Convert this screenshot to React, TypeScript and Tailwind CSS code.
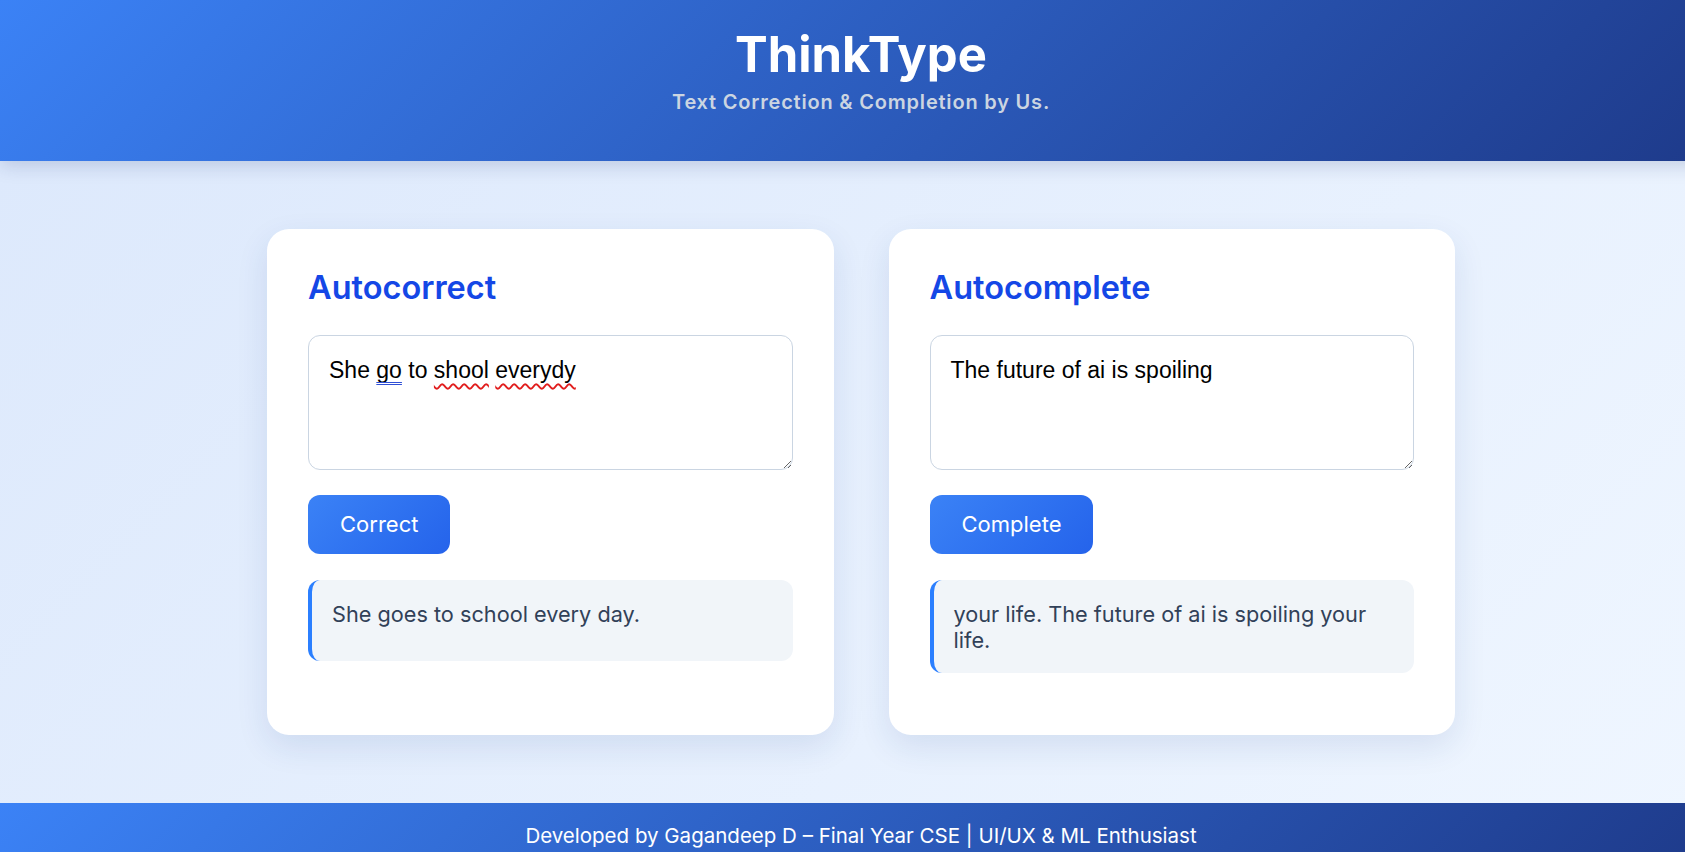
import React, { useState } from "react";

type Mark = { text: string; kind?: "spell" | "grammar" };

const Card = ({
  title,
  value,
  marks,
  action,
  result,
}: {
  title: string;
  value: string;
  marks: Mark[];
  action: string;
  result: string;
}) => {
  const [text, setText] = useState(value);

  return (
    <div className="flex flex-col bg-white rounded-[22px] px-[41px] pt-[38px] pb-[62px] shadow-[0_12px_32px_rgba(30,64,140,0.11)]">
      <h2 className="text-[32.5px] leading-[41px] font-semibold text-blue-700">{title}</h2>
      <div className="relative mt-[27px]">
        <textarea
          value={text}
          onChange={(e) => setText(e.target.value)}
          spellCheck={false}
          className="block h-[135px] w-full rounded-xl border border-slate-300 px-5 pt-[21px] pb-[17px] text-[23px] leading-[26px] text-black font-['Liberation_Sans',Arial,sans-serif] outline-none"
        />
        {/* spellcheck marks drawn over the textarea */}
        {text === value && (
          <div className="pointer-events-none absolute inset-0 border border-transparent px-5 pt-[21px] text-[23px] leading-[26px] text-transparent font-['Liberation_Sans',Arial,sans-serif] whitespace-pre [text-decoration-skip-ink:none]">
            {marks.map((m, i) =>
              m.kind === "spell" ? (
                <span key={i} className="underline decoration-wavy decoration-[#e11d1d] decoration-[1.5px] underline-offset-[5px]">
                  {m.text}
                </span>
              ) : m.kind === "grammar" ? (
                <span key={i} className="underline decoration-double decoration-[#2f4fd6] decoration-1 underline-offset-[4px]">
                  {m.text}
                </span>
              ) : (
                <span key={i}>{m.text}</span>
              )
            )}
          </div>
        )}
      </div>
      <div>
        <button className="mt-[25px] h-[59px] px-8 rounded-xl bg-linear-135 from-[#3b82f6] to-[#2563eb] text-white text-[22px]">
          {action}
        </button>
      </div>
      <div className="mt-[26px] min-h-[81px] rounded-xl border-l-4 border-blue-500 bg-slate-100 px-5 pt-[21px] pb-5 text-[21.7px] leading-[26px] text-slate-700">
        {result}
      </div>
    </div>
  );
};

export default function App() {
  return (
    <div className="h-screen overflow-hidden font-['Inter',sans-serif]">
      <div className="w-[1722px]">
        <header className="relative z-10 h-[161px] flex flex-col items-center pt-[25px] bg-linear-135 from-[#3b82f6] to-[#1e3a8a] shadow-[0_4px_18px_rgba(15,40,100,0.18)]">
          <h1 className="text-[49px] leading-[60px] font-bold text-white">ThinkType</h1>
          <p className="mt-[5px] text-[20px] leading-[24px] font-semibold tracking-[0.8px] text-[#cbd5e1]">
            Text Correction &amp; Completion by Us.
          </p>
        </header>

        <main className="py-[68px] bg-linear-135 from-[#dde9fc] to-[#eff6ff]">
          <div className="mx-auto w-[1188px] grid grid-cols-2 gap-[55px]">
            <Card
              title="Autocorrect"
              value="She go to shool everydy"
              marks={[
                { text: "She " },
                { text: "go", kind: "grammar" },
                { text: " to " },
                { text: "shool", kind: "spell" },
                { text: " " },
                { text: "everydy", kind: "spell" },
              ]}
              action="Correct"
              result="She goes to school every day."
            />
            <Card
              title="Autocomplete"
              value="The future of ai is spoiling"
              marks={[]}
              action="Complete"
              result="your life. The future of ai is spoiling your life."
            />
          </div>
        </main>

        <footer className="py-5 text-center text-[20.5px] leading-[25px] text-white bg-linear-135 from-[#3b82f6] to-[#1e3a8a]">
          Developed by Gagandeep D – Final Year CSE | UI/UX &amp; ML Enthusiast
        </footer>
      </div>
    </div>
  );
}
